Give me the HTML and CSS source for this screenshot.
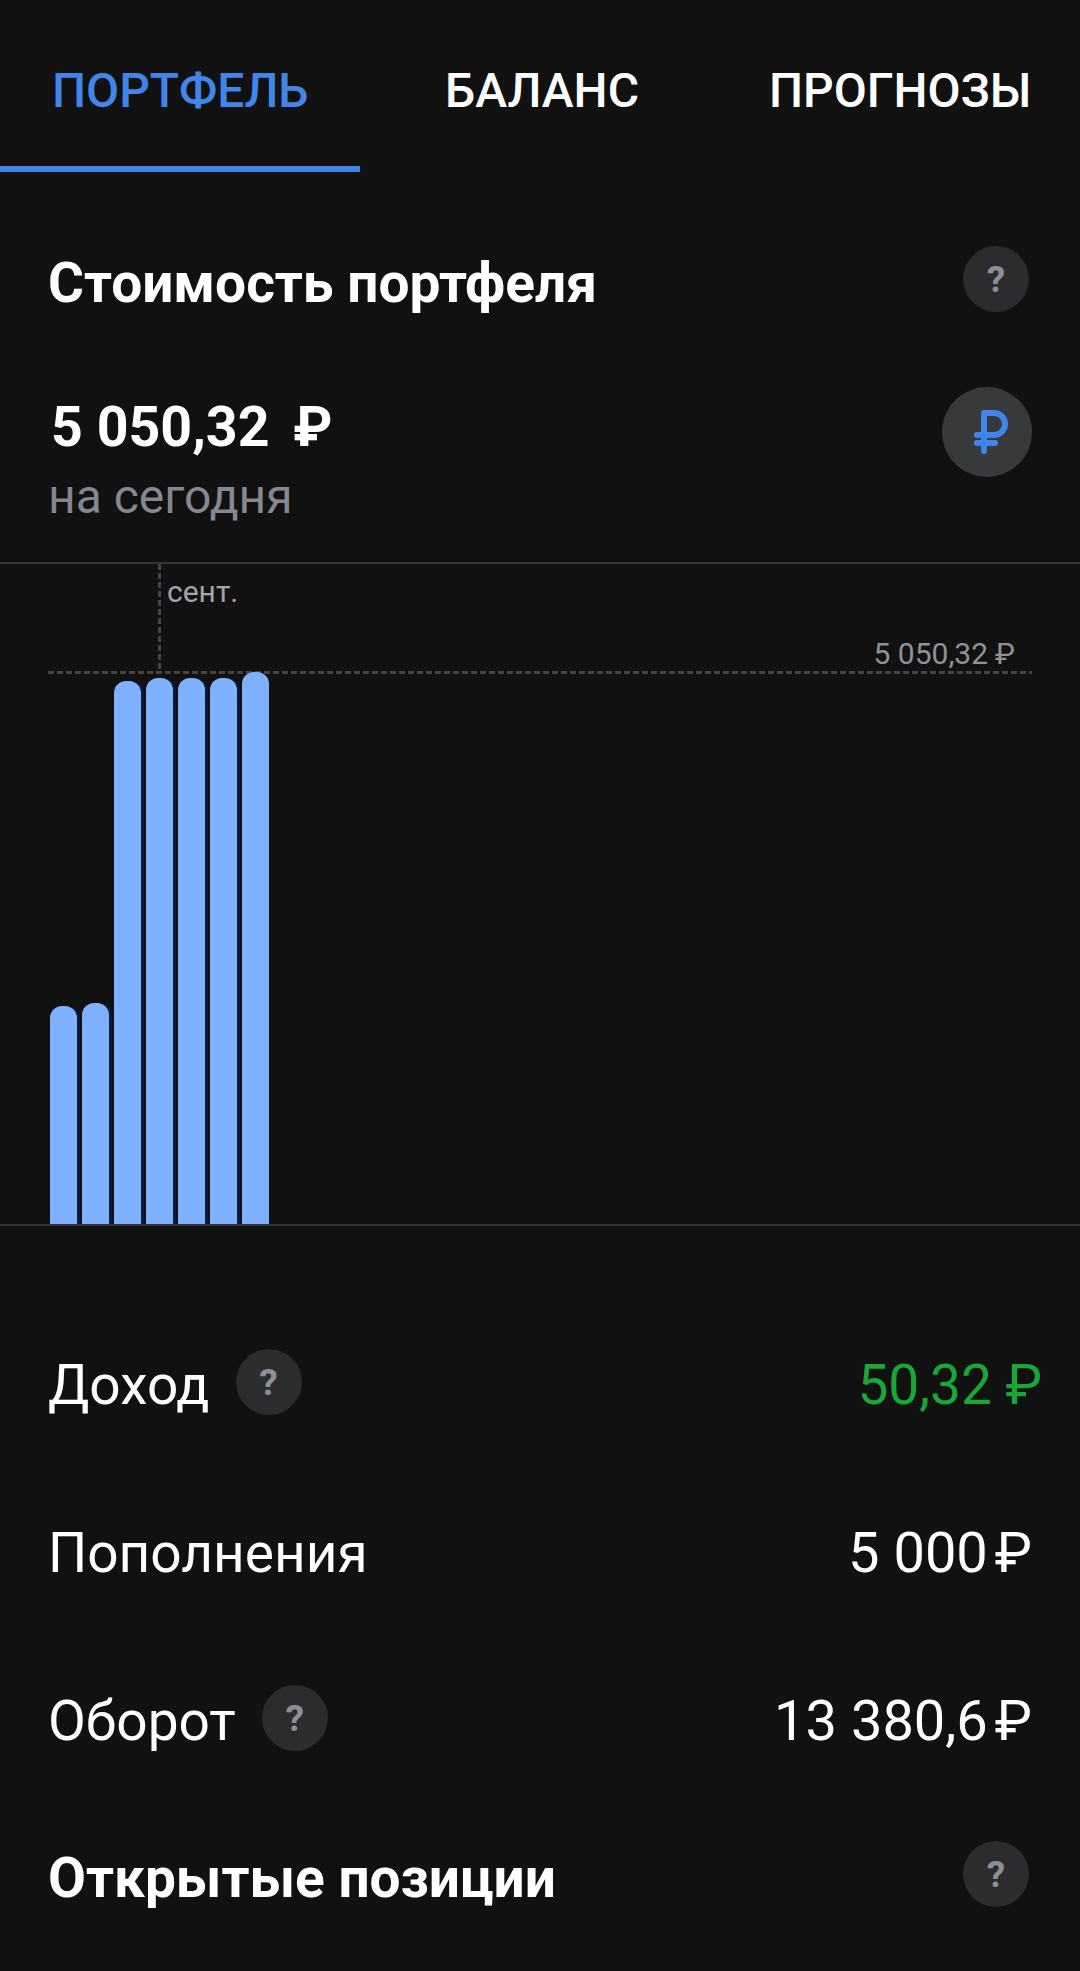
FILE: index.html
```html
<!DOCTYPE html>
<html lang="ru">
<head>
    <meta charset="UTF-8">
    <title>Портфель</title>
    <link rel="stylesheet" href="styles.css">
</head>
<body>
    <nav class="tabs">
        <a class="tab tab-active">ПОРТФЕЛЬ</a>
        <a class="tab tab-balance">БАЛАНС</a>
        <a class="tab tab-forecast">ПРОГНОЗЫ</a>
    </nav>

    <div class="title-row title-first">
        <h2>Стоимость портфеля</h2>
        <span class="hint">?</span>
    </div>

    <div class="total">
        <div>
            <p class="total-value">5 050,32 <span class="total-cur">₽</span></p>
            <p class="total-date">на сегодня</p>
        </div>
        <span class="currency">
            <svg width="90" height="90" viewBox="0 0 90 90">
                <path d="M42 64V26H52a11 11 0 0 1 0 22H35M35 56H53" fill="none" stroke="#4285e8" stroke-width="6" stroke-linecap="round" stroke-linejoin="round"/>
            </svg>
        </span>
    </div>

    <div class="chart">
        <span class="month">сент.</span>
        <span class="month-line"></span>
        <span class="max-line"></span>
        <span class="max-label">5 050,32<span class="tight-cur">₽</span></span>
        <div class="bars">
            <div class="bar bar-low"></div>
            <div class="bar bar-low2"></div>
            <div class="bar bar-mid"></div>
            <div class="bar bar-high"></div>
            <div class="bar bar-high"></div>
            <div class="bar bar-high"></div>
            <div class="bar bar-top"></div>
        </div>
    </div>

    <div class="stats">
        <div class="stat">
            <div class="stat-name"><span class="stat-text">Доход</span> <span class="hint">?</span></div>
            <div class="stat-value green">50,32 ₽</div>
        </div>
        <div class="stat">
            <div class="stat-name"><span class="stat-text">Пополнения</span></div>
            <div class="stat-value">5 000<span class="tight-cur">₽</span></div>
        </div>
        <div class="stat">
            <div class="stat-name"><span class="stat-text">Оборот</span> <span class="hint">?</span></div>
            <div class="stat-value">13 380,6<span class="tight-cur">₽</span></div>
        </div>
    </div>

    <div class="title-row">
        <h2>Открытые позиции</h2>
        <span class="hint">?</span>
    </div>
</body>
</html>
```

FILE: styles.css
```css
* {
    box-sizing: border-box;
}

html, body {
    height: 100%;
}

body {
    margin: 0;
    background-color: #111112;
    color: #fff;
    font-family: Roboto, "Liberation Sans", sans-serif;
    overflow: hidden;
}

h2, p {
    margin: 0;
}

.tabs {
    display: flex;
    height: 172px;
}

.tab {
    font-size: 48px;
    line-height: 182px;
    height: 172px;
    font-weight: 500;
}

.tab-active {
    width: 360px;
    padding-left: 52px;
    color: #4285e8;
    border-bottom: 6px solid #4285e8;
}

.tab-balance {
    width: 409px;
    padding-left: 85px;
}

.title-row {
    display: flex;
    justify-content: space-between;
    align-items: center;
    height: 66px;
    padding: 0 51px 0 48px;
}

.title-first {
    margin-top: 74px;
}

.title-row h2 {
    font-size: 55px;
    font-weight: 700;
    padding-top: 8px;
}

.hint {
    display: inline-flex;
    justify-content: center;
    align-items: center;
    width: 66px;
    height: 66px;
    border-radius: 50%;
    background-color: #2b2c2e;
    color: #8e9095;
    font-size: 37px;
    font-weight: 700;
}

/* valor total + icone da moeda */
.total {
    display: flex;
    justify-content: space-between;
    align-items: flex-start;
    height: 177px;
    margin-top: 75px;
    padding: 0 48px;
    border-bottom: 2px solid #333;
}

.total-value {
    font-size: 55.5px;
    font-weight: 700;
    line-height: 60px;
    margin-top: 11px;
    padding-left: 3px;
}

.total-cur {
    margin-left: 10px;
}

.total-date {
    font-size: 48px;
    line-height: 50px;
    color: #85888e;
    margin-top: 14px;
}

.currency {
    display: block;
    width: 90px;
    height: 90px;
    border-radius: 50%;
    background-color: #38393b;
}

.chart {
    position: relative;
    height: 662px;
    border-bottom: 2px solid #333;
}

.bars {
    position: relative;
    display: flex;
    align-items: flex-end;
    gap: 5px;
    height: 100%;
    padding-left: 50px;
}

.bar {
    width: 27px;
    background-color: #7eb0ff;
    border-radius: 12px 12px 0 0;
    box-shadow: 3px 0 0 #071a33;
}

.bar:last-child {
    box-shadow: none;
}

.bar-low {
    height: 218px;
}

.bar-low2 {
    height: 221px;
}

.bar-mid {
    height: 543px;
}

.bar-high {
    height: 546px;
}

.bar-top {
    height: 552px;
}

.month {
    position: absolute;
    left: 167px;
    top: 10px;
    font-size: 30px;
    color: #a3a5a8;
}

.month-line {
    position: absolute;
    left: 158px;
    top: 0;
    width: 3px;
    height: 107px;
    background: repeating-linear-gradient(to bottom, #444 0 6px, transparent 6px 9px);
}

.max-line {
    position: absolute;
    left: 48px;
    right: 48px;
    top: 107px;
    height: 3px;
    background: repeating-linear-gradient(to right, #444 0 6px, transparent 6px 9px);
}

.max-label {
    position: absolute;
    right: 65px;
    top: 72px;
    font-size: 30px;
    color: #8f9195;
}

.tight-cur {
    margin-left: 7px;
}

.stats {
    padding: 123px 48px 0;
}

.stat {
    display: flex;
    justify-content: space-between;
    align-items: center;
    height: 66px;
    margin-bottom: 102px;
}

.stat:last-child {
    margin-bottom: 90px;
}

.stat-name {
    display: flex;
    align-items: center;
    gap: 26px;
}

.stat-text {
    font-size: 55px;
    padding-top: 6px;
}

.stat-value {
    font-size: 56px;
    padding-top: 6px;
}

.green {
    color: #18a838;
    font-size: 55px;
    margin-right: -10px;
}
```
